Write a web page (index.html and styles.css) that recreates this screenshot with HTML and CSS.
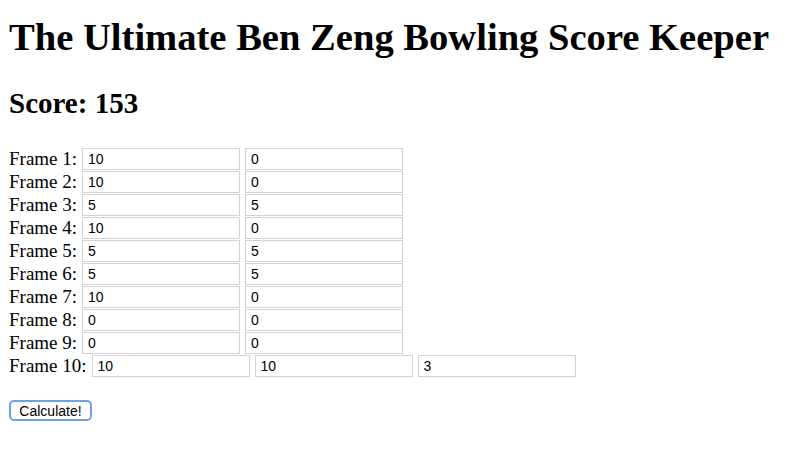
FILE: index.html
```html
<!DOCTYPE html>
<html>
<head>
<meta charset="utf-8">
<link rel="stylesheet" href="styles.css">
</head>
<body>
<h1 class="title">The Ultimate Ben Zeng Bowling Score Keeper</h1>
<h2 class="score">Score: 153</h2>
<form class="frames">
  <div class="row"><span class="label">Frame 1:</span><input class="roll" value="10"><input class="roll" value="0"></div>
  <div class="row"><span class="label">Frame 2:</span><input class="roll" value="10"><input class="roll" value="0"></div>
  <div class="row"><span class="label">Frame 3:</span><input class="roll" value="5"><input class="roll" value="5"></div>
  <div class="row"><span class="label">Frame 4:</span><input class="roll" value="10"><input class="roll" value="0"></div>
  <div class="row"><span class="label">Frame 5:</span><input class="roll" value="5"><input class="roll" value="5"></div>
  <div class="row"><span class="label">Frame 6:</span><input class="roll" value="5"><input class="roll" value="5"></div>
  <div class="row"><span class="label">Frame 7:</span><input class="roll" value="10"><input class="roll" value="0"></div>
  <div class="row"><span class="label">Frame 8:</span><input class="roll" value="0"><input class="roll" value="0"></div>
  <div class="row"><span class="label">Frame 9:</span><input class="roll" value="0"><input class="roll" value="0"></div>
  <div class="row"><span class="label">Frame 10:</span><input class="roll" value="10"><input class="roll" value="10"><input class="roll" value="3"></div>
  <button type="button" class="calc">Calculate!</button>
</form>
</body>
</html>
```

FILE: styles.css
```css
html, body {
  margin: 0;
  padding: 0;
  background: #fff;
}
body {
  padding: 16px 9px 0 9px;
  font-family: "Liberation Serif", "Times New Roman", serif;
  color: #000;
}
.title {
  margin: 0;
  font-size: 38.6px;
  line-height: 43px;
  font-weight: bold;
  white-space: nowrap;
}
.score {
  margin: 28px 0 0 0;
  font-size: 29px;
  line-height: 33px;
  font-weight: bold;
}
.frames {
  margin-top: 27px;
  display: flex;
  flex-direction: column;
  align-items: flex-start;
}
.row {
  display: flex;
  align-items: center;
  gap: 5px;
  height: 23px;
}
.label {
  font-size: 19px;
  line-height: 23px;
}
.roll {
  box-sizing: border-box;
  width: 158px;
  height: 22px;
  margin: 0;
  padding: 1px 5px 0 5px;
  border: 1px solid #d3d3d3;
  border-radius: 0;
  background: #fff;
  font-family: "Liberation Sans", Arial, sans-serif;
  font-size: 14px;
  color: #000;
  outline: none;
}
.calc {
  margin-top: 23px;
  box-sizing: border-box;
  width: 83px;
  height: 21px;
  padding: 0;
  border: 2px solid #6fa0ec;
  border-radius: 5px;
  background: #fff;
  font-family: "Liberation Sans", Arial, sans-serif;
  font-size: 14px;
  color: #000;
}
```
